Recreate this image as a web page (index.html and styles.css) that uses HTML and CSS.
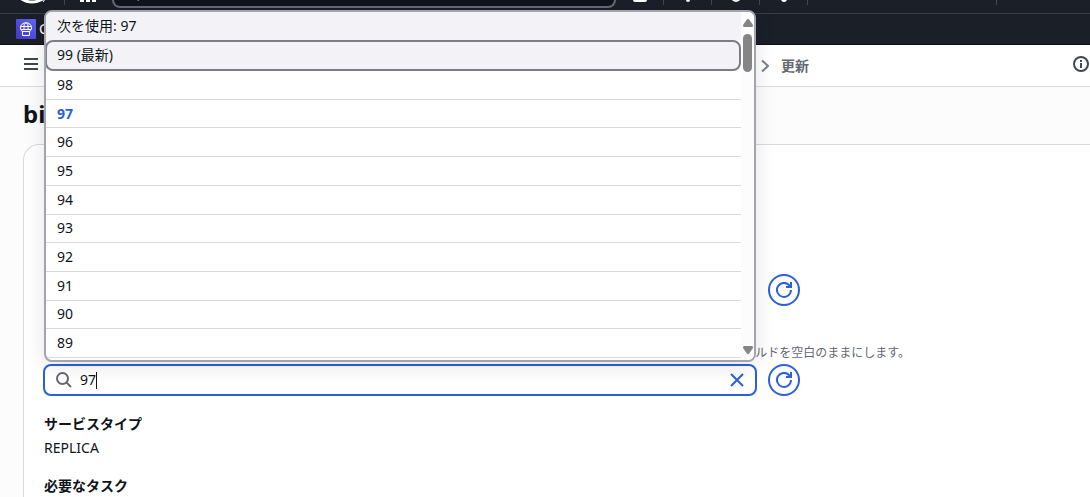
FILE: index.html
```html
<!DOCTYPE html>
<html lang="ja">
<head>
    <meta charset="UTF-8">
    <meta name="viewport" content="width=device-width, initial-scale=1.0">
    <title>更新</title>
    <link rel="stylesheet" href="styles.css">
</head>
<body>
    <header class="console-header">
        <!-- Global bar, scrolled so only its bottom edge shows -->
        <div class="global-bar">
            <svg class="logo" width="30" height="13" viewBox="0 0 30 13"><path d="M1 -3Q12 6 25 -1" fill="none" stroke="#fff" stroke-width="3"/><path d="M25 2Q27 0 27 -2" fill="none" stroke="#fff" stroke-width="1"/></svg>
            <span class="divider"></span>
            <svg class="apps" width="17" height="13" viewBox="0 0 17 13" fill="#fff"><path d="M0 -2h4v4h-4zM6 -2h4v4h-4zM12 -2h4v4h-4z"/></svg>
            <div class="global-search"><svg width="6" height="6" viewBox="0 0 6 6"><path d="M2 1L3 -2" stroke="#a4a4ad" stroke-width="1"/></svg></div>
            <div class="tool"><svg width="14" height="13" viewBox="0 0 14 13"><rect x="0" y="-8" width="14" height="10" rx="2" fill="#fff"/></svg></div>
            <div class="tool"><svg width="14" height="13" viewBox="0 0 14 13"><circle cx="7" cy="0" r="2" fill="#fff"/></svg></div>
            <div class="tool"><svg width="14" height="13" viewBox="0 0 14 13"><circle cx="7" cy="-3" r="5" fill="#fff"/></svg></div>
            <div class="tool"><svg width="14" height="13" viewBox="0 0 14 13"><circle cx="7" cy="-1" r="3" fill="#fff"/></svg></div>
            <div class="region"></div>
        </div>
        <div class="favorites">
            <a href="#" class="favorite">
                <svg width="20" height="20" viewBox="0 0 20 20">
                    <defs><linearGradient id="purple" x1="0" y1="1" x2="1" y2="0"><stop offset="0" stop-color="#4036c4"/><stop offset="1" stop-color="#6267f4"/></linearGradient></defs>
                    <rect width="20" height="20" rx="1" fill="url(#purple)"/>
                    <g fill="none" stroke="#fff" stroke-width="1"><path d="M4.500 9C4.500 2 15.500 2 15.500 9V10.500H4.500ZM8 10V7C8 5 9 4 10 4S12 5 12 7V10M4.500 7.500H15.500M5.500 10.500L6 12.500H14L14.500 10.500M6.500 12.500V16.500H13.500V12.500"/></g>
                </svg>
                <span>C</span>
            </a>
        </div>
    </header>

    <nav class="breadcrumb-bar">
        <button type="button" class="icon-button" aria-label="メニュー">
            <svg width="16" height="14" viewBox="0 0 16 14" fill="none" stroke="#424650" stroke-width="2"><path d="M1 2H15M1 7H15M1 12H15"/></svg>
        </button>
        <div class="breadcrumb">
            <svg width="8" height="14" viewBox="0 0 8 14" fill="none" stroke="#7d8089" stroke-width="2"><path d="M1 1.500L7 7L1 12.500"/></svg>
            <span>更新</span>
        </div>
        <button type="button" class="icon-button" aria-label="情報">
            <svg width="16" height="16" viewBox="0 0 16 16" fill="none" stroke="#424650" stroke-width="2"><circle cx="8" cy="8" r="7"/><path d="M8 4V6M8 7V12"/></svg>
        </button>
    </nav>

    <main>
        <h1>bi</h1>

        <form class="panel">
            <div class="field-row">
                <div></div>
                <button type="button" class="refresh" aria-label="更新">
                    <svg width="16" height="16" viewBox="0 0 16 16" fill="none" stroke="#2a5fe0" stroke-width="2"><path d="M15 8A7 7 0 1 1 13 3L15 5M15 0V5H10"/></svg>
                </button>
            </div>

            <p class="hint">ルドを空白のままにします。</p>
            <div class="field-row">
                <div class="combobox">
                    <svg class="search-icon" width="16" height="16" viewBox="0 0 16 16" fill="none" stroke="#656871" stroke-width="2"><circle cx="6.500" cy="6.500" r="5.500"/><path d="M10.500 10.500L15 15"/></svg>
                    <input type="text" id="revision" value="97" aria-label="リビジョン" autocomplete="off">
                    <span class="caret"></span>
                    <button type="button" class="icon-button" aria-label="クリア">
                        <svg width="14" height="14" viewBox="0 0 14 14" fill="none" stroke="#2a5fe0" stroke-width="2"><path d="M1 1L13 13M13 1L1 13"/></svg>
                    </button>

                    <div class="dropdown">
                        <div class="options">
                            <div class="use-entered">次を使用: 97</div>
                            <div class="option-active">99 (最新)</div>
                            <ul class="option-list">
                                <li>98</li>
                                <li class="selected">97</li>
                                <li>96</li>
                                <li>95</li>
                                <li>94</li>
                                <li>93</li>
                                <li>92</li>
                                <li>91</li>
                                <li>90</li>
                                <li>89</li>
                            </ul>
                        </div>
                        <div class="scrollbar">
                            <svg width="10" height="8" viewBox="0 0 10 8" fill="#858585"><path d="M5 0Q6 0 6.500 1L10 6Q10 8 9 8H1Q0 8 0 6L3.500 1Q4 0 5 0Z"/></svg>
                            <div class="thumb"></div>
                            <svg width="10" height="8" viewBox="0 0 10 8" fill="#858585"><path d="M5 8Q6 8 6.500 7L10 2Q10 0 9 0H1Q0 0 0 2L3.500 7Q4 8 5 8Z"/></svg>
                        </div>
                    </div>
                </div>
                <button type="button" class="refresh" aria-label="更新">
                    <svg width="16" height="16" viewBox="0 0 16 16" fill="none" stroke="#2a5fe0" stroke-width="2"><path d="M15 8A7 7 0 1 1 13 3L15 5M15 0V5H10"/></svg>
                </button>
            </div>

            <dl class="details">
                <dt>サービスタイプ</dt>
                <dd>REPLICA</dd>
                <dt>必要なタスク</dt>
            </dl>
        </form>
    </main>
</body>
</html>
```
FILE: styles.css
```css
* {
    margin: 0;
    padding: 0;
    box-sizing: border-box;
}

body {
    background: #fcfcfd;
    color: #0f141a;
    font-family: "Noto Sans", "Noto Sans CJK JP", sans-serif;
    font-size: 14px;
    line-height: 20px;
    display: flex;
    flex-direction: column;
    min-height: 100vh;
}

svg {
    display: block;
    flex-shrink: 0;
}

button {
    background: none;
    border: none;
    cursor: pointer;
}

/* Console header */
.console-header {
    background: #1a1f28;
    border-bottom: 1px solid #0c1016;
}

.global-bar {
    display: flex;
    height: 14px;
    padding-left: 18px;
    border-bottom: 1px solid #383d47;
}

.divider {
    width: 1px;
    height: 5px;
    margin: 0 15px 0 16px;
    background: #424853;
}

.global-search {
    width: 504px;
    height: 8px;
    margin-left: 15px;
    padding-left: 22px;
    background: #10141b;
    border: 2px solid #656b76;
    border-top: none;
    border-radius: 0 0 8px 8px;
}

.tool {
    display: flex;
    justify-content: center;
    width: 48px;
    height: 5px;
    border-right: 1px solid #424853;
}

.region {
    width: 189px;
    height: 5px;
    border-right: 1px solid #424853;
}

.favorites {
    height: 30px;
    padding: 5px 16px;
}

.favorite {
    display: inline-flex;
    align-items: center;
    gap: 3px;
    color: #fff;
    text-decoration: none;
}

/* Breadcrumbs */
.breadcrumb-bar {
    display: flex;
    align-items: center;
    height: 42px;
    padding: 0 1px 3px 23px;
    background: #fff;
    border-bottom: 1px solid #d8dae0;
}

.breadcrumb {
    display: flex;
    align-items: center;
    gap: 12px;
    flex: 1;
    margin: 3px 0 0 722px;
    color: #656871;
    font-weight: 700;
}

/* Form */
main {
    display: flex;
    flex: 1;
    flex-direction: column;
}

h1 {
    padding: 11px 23px 14px;
    font-size: 24px;
    line-height: 32px;
}

.panel {
    flex: 1;
    margin-left: 23px;
    padding: 129px 0 0 19px;
    background: #fff;
    border: 1px solid #d8dae0;
    border-right: none;
    border-bottom: none;
    border-radius: 16px 0 0 0;
}

.field-row {
    display: grid;
    grid-template-columns: 1fr 32px;
    align-items: center;
    gap: 11px;
    max-width: 757px;
}

.refresh {
    display: flex;
    align-items: center;
    justify-content: center;
    width: 32px;
    height: 32px;
    border: 2px solid #2a5fe0;
    border-radius: 50%;
}

.hint {
    max-width: 867px;
    margin: 37px 0 1px;
    color: #656871;
    font-size: 12px;
    text-align: right;
}

.combobox {
    position: relative;
    display: flex;
    align-items: center;
    height: 32px;
    padding: 0 11px;
    background: #fff;
    border: 2px solid #2a5fe0;
    border-radius: 8px;
}

.combobox input {
    width: 16px;
    margin-left: 8px;
    border: none;
    outline: none;
    background: none;
    color: inherit;
    font: inherit;
}

.caret {
    width: 1px;
    height: 17px;
    margin-right: auto;
    background: #0f141a;
}

/* Suggestions */
.dropdown {
    position: absolute;
    right: -1px;
    bottom: calc(100% + 4px);
    left: -1px;
    display: flex;
    height: 352px;
    overflow: hidden;
    background: #fff;
    border: 2px solid #a4a4ad;
    border-radius: 8px;
    box-shadow: 0 4px 20px 1px rgba(0, 7, 22, 0.1);
}

.options {
    flex: 1;
}

.use-entered {
    height: 28px;
    padding: 4px 11px;
    background: #f3f3f7;
}

.option-active {
    height: 31px;
    margin-left: -1px;
    padding: 3px 10px;
    background: #f3f3f7;
    border: 2px solid #7d7d85;
    border-radius: 8px;
}

.option-list {
    display: grid;
    grid-auto-rows: 1fr;
    height: 287px;
    list-style: none;
}

.option-list li {
    display: flex;
    align-items: center;
    padding: 0 11px;
    border-bottom: 1px solid #d8dae0;
}

.option-list .selected {
    color: #2a5fe0;
    font-weight: 700;
}

.scrollbar {
    display: flex;
    flex-direction: column;
    align-items: center;
    width: 13px;
    padding: 7px 0 6px;
    background: #fcfcfc;
}

.thumb {
    width: 9px;
    height: 38px;
    margin: 7px 0 auto;
    background: #858585;
    border-radius: 5px;
}

.details {
    height: 80px;
    margin: 18px 0 0 1px;
}

.details dt {
    font-weight: 700;
}

.details dd {
    margin: 4px 0 18px;
}
```
